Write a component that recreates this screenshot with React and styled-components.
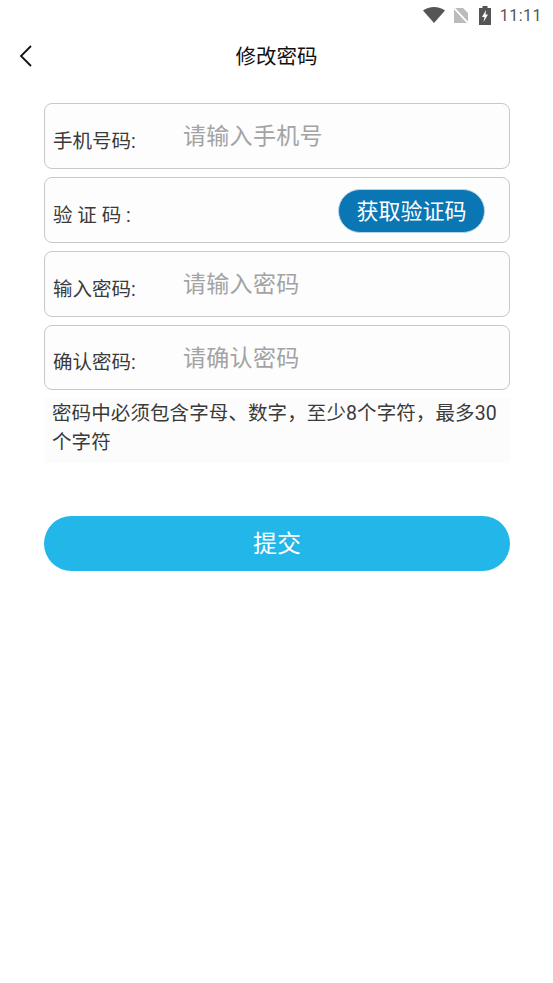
import React from 'react'
import styled, { createGlobalStyle } from 'styled-components'

const Global = createGlobalStyle`
html, body {
  margin: 0;
  padding: 0;
  background: #fff;
  font-family: "Roboto", "Noto Sans CJK SC", sans-serif;
}
`

const Page = styled.div`
  width: 553px;
  height: 983px;
  overflow: hidden;
  background: #fff;
`

const StatusBar = styled.div`
  height: 30px;
  display: flex;
  align-items: center;
  justify-content: flex-end;
  padding-right: 11px;
  box-sizing: border-box;
  color: #555;
`

const Clock = styled.span`
  font-size: 16px;
  margin-left: 9px;
  letter-spacing: 0.5px;
`

const StatusIcon = styled.svg`
  display: block;
  margin-left: ${p => p.$gap || 0}px;
`

const Header = styled.div`
  height: 52px;
  display: flex;
  align-items: center;
  justify-content: center;
  position: relative;
`

const Back = styled.svg`
  position: absolute;
  left: 18px;
  top: 15px;
`

const Title = styled.h1`
  margin: -3px 0 0;
  font-size: 20.5px;
  font-weight: 400;
  color: #111;
`

const Form = styled.div`
  margin: 21px 43px 0 44px;
  display: flex;
  flex-direction: column;
  gap: 8px;
`

const Row = styled.div`
  height: ${p => p.$height || 66}px;
  box-sizing: border-box;
  border: 1px solid #c8c8c8;
  border-radius: 8px;
  background: #fdfdfd;
  display: flex;
  align-items: center;
  position: relative;
`

const Label = styled.span`
  width: 138px;
  flex: none;
  padding: 6px 0 0 8px;
  box-sizing: border-box;
  font-size: 19.5px;
  color: #3a3a3a;
  white-space: pre;
`

const Hint = styled.span`
  font-size: 23px;
  letter-spacing: 0.3px;
  color: #a3a3a3;
  margin-top: -4px;
`

const CodeButton = styled.button`
  position: absolute;
  left: 293px;
  top: 11px;
  width: 147px;
  height: 44px;
  border: 1px solid #b5d3e4;
  border-radius: 22px;
  background: #0a76b4;
  color: #fff;
  font-family: inherit;
  font-size: 22px;
  padding: 0 0 4px;
`

const Note = styled.div`
  height: 64px;
  padding: 1px 8px 0;
  background: #fcfcfc;
  font-size: 19.5px;
  letter-spacing: 0.1px;
  line-height: 29px;
  color: #3a3a3a;
  margin-bottom: 45px;
`

const Submit = styled.button`
  height: 55px;
  border: none;
  border-radius: 28px;
  background: #22b7e8;
  color: #fff;
  font-family: inherit;
  font-size: 24px;
  line-height: 30px;
  padding: 0;
`

export default function App() {
  return (
    <Page>
      <Global />
      <StatusBar>
        <StatusIcon width="22" height="16" viewBox="0 0 22 16">
          <path d="M0 3.5C3 1.2 7 0 11 0s8 1.2 11 3.5L11 16z" fill="#555" />
        </StatusIcon>
        <StatusIcon $gap={8} width="16" height="17" viewBox="0 0 16 17">
          <path d="M1 1h9l5 5v10H1z" fill="#bbb" />
          <path d="M0 0l16 17" stroke="#fff" strokeWidth="1.8" />
        </StatusIcon>
        <StatusIcon $gap={10} width="12" height="19" viewBox="0 0 12 19">
          <path d="M3.5 0h5v2H12v17H0V2h3.5z" fill="#555" />
          <path d="M7 4L3 11h2.5L4.5 16 9 8.5H6.5z" fill="#fff" />
        </StatusIcon>
        <Clock>11:11</Clock>
      </StatusBar>
      <Header>
        <Back width="16" height="22" viewBox="0 0 16 22">
          <path d="M13 1L3 11l10 10" fill="none" stroke="#111" strokeWidth="1.8" />
        </Back>
        <Title>修改密码</Title>
      </Header>
      <Form>
        <Row>
          <Label>手机号码:</Label>
          <Hint>请输入手机号</Hint>
        </Row>
        <Row>
          <Label>验 证 码 :</Label>
          <CodeButton>获取验证码</CodeButton>
        </Row>
        <Row>
          <Label>输入密码:</Label>
          <Hint>请输入密码</Hint>
        </Row>
        <Row $height={65}>
          <Label>确认密码:</Label>
          <Hint>请确认密码</Hint>
        </Row>
        <Note>密码中必须包含字母、数字，至少8个字符，最多30个字符</Note>
        <Submit>提交</Submit>
      </Form>
    </Page>
  )
}
